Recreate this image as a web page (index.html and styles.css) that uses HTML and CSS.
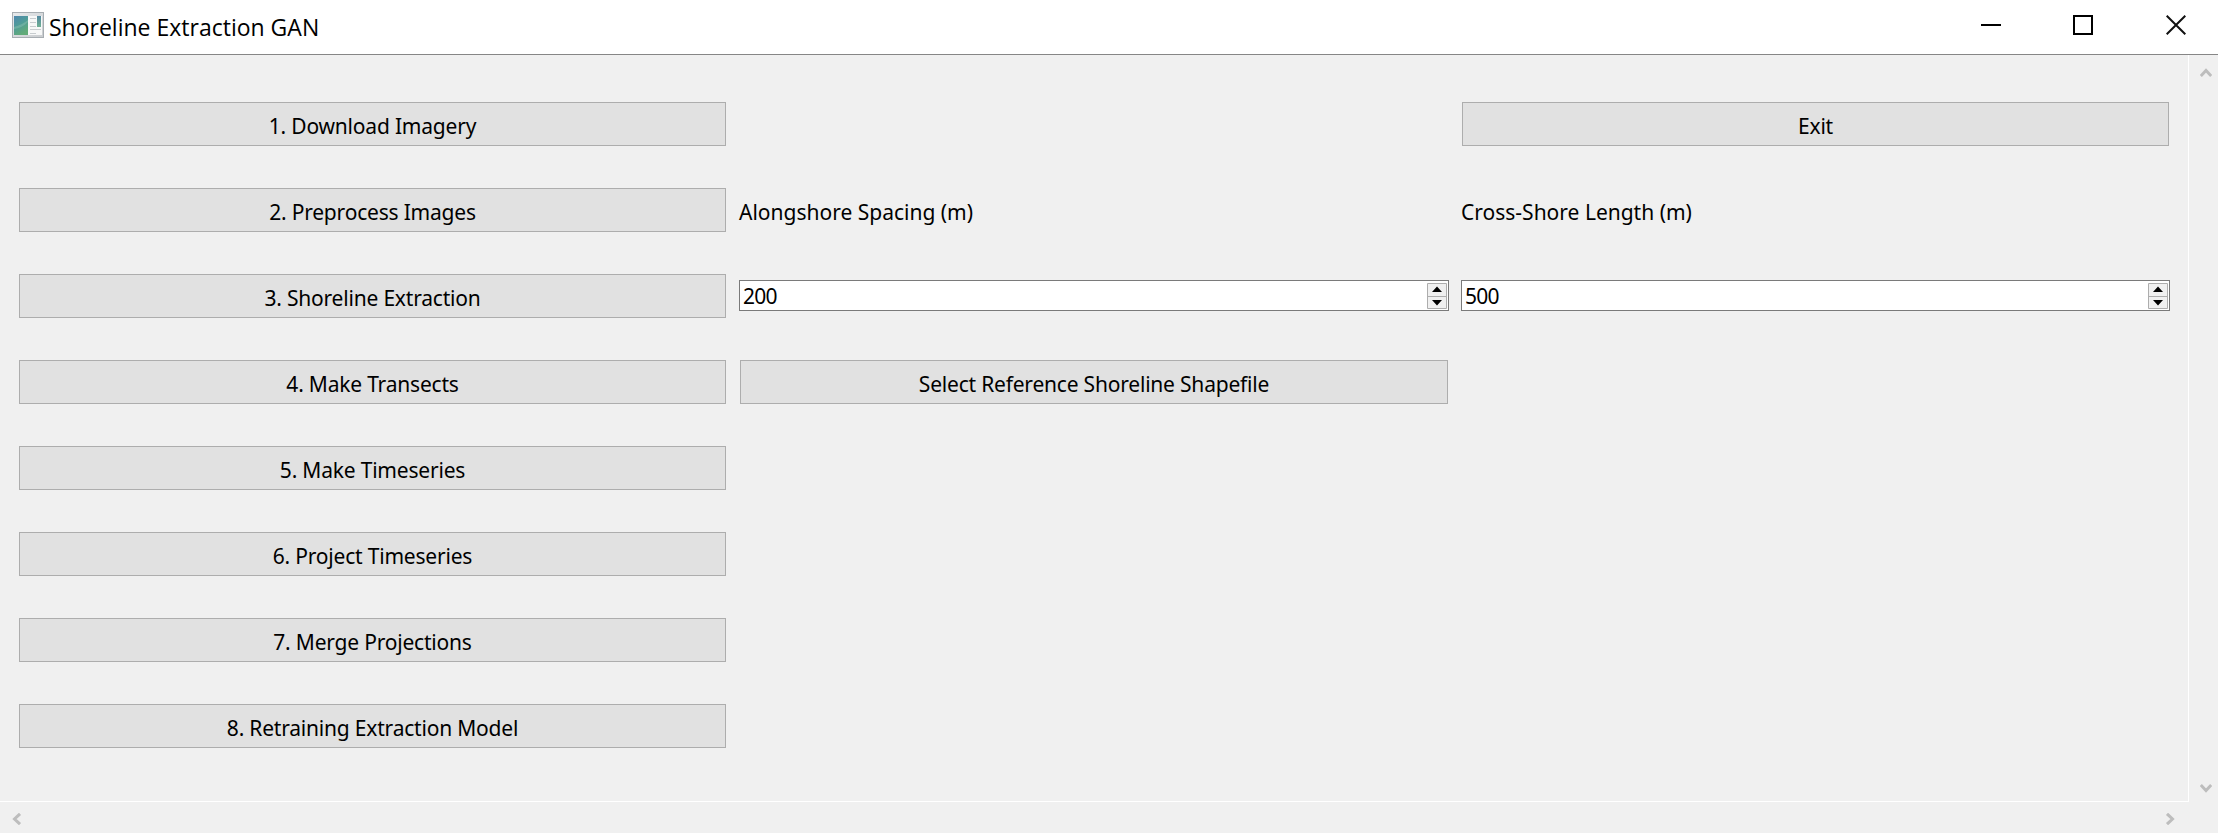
FILE: index.html
```html
<!DOCTYPE html>
<html lang="en">
<head>
<meta charset="utf-8">
<title>Shoreline Extraction GAN</title>
<link rel="stylesheet" href="styles.css">
</head>
<body>
<header class="titlebar">
  <svg class="app-icon" width="32" height="26" viewBox="0 0 32 26">
    <defs>
      <linearGradient id="pane" x1="0" y1="0" x2="0.5" y2="1"><stop offset="0" stop-color="#4e86ae"/><stop offset="0.5" stop-color="#4f9c98"/><stop offset="1" stop-color="#62ab78"/></linearGradient>
      <linearGradient id="side" x1="0" y1="0" x2="0" y2="1"><stop offset="0" stop-color="#5288a0"/><stop offset="1" stop-color="#70b094"/></linearGradient>
      <linearGradient id="frame" x1="0" y1="0" x2="1" y2="1"><stop offset="0" stop-color="#e6e9eb"/><stop offset="1" stop-color="#c9cccf"/></linearGradient>
    </defs>
    <rect x="0.5" y="0.5" width="31" height="25" fill="url(#frame)" stroke="#a7adb2"/>
    <rect x="2" y="4" width="28" height="19" fill="#f7f8f8"/>
    <rect x="2" y="4" width="14" height="19" fill="url(#pane)"/>
    <path d="M2 15Q10 13 16 8V10Q10 16 2 17Z" fill="#7fb9ac" opacity=".6"/>
    <path d="M18 6.500H24M18 10.500H24M18 14.500H24M18 17.500H29M18 21.500H24" stroke="#c7cccf"/>
    <rect x="25" y="4" width="4" height="11" fill="url(#side)"/>
  </svg>
  <h1 class="title"><span class="t-title">Shoreline Extraction GAN</span></h1>
  <div class="controls">
    <svg width="20" height="20" viewBox="0 0 20 20"><path d="M0 10H20" stroke="#000" stroke-width="2"/></svg>
    <svg width="20" height="20" viewBox="0 0 20 20"><path d="M1 1H19V19H1Z" fill="none" stroke="#000" stroke-width="2"/></svg>
    <svg width="20" height="20" viewBox="0 0 20 20"><path d="M.7.7L19.300 19.300M19.300.7L.7 19.300" stroke="#111" stroke-width="2"/></svg>
  </div>
</header>
<main class="scroll-area">
  <section class="content">
    <div class="col">
      <button class="btn">1. Download Imagery</button>
      <button class="btn">2. Preprocess Images</button>
      <button class="btn">3. Shoreline Extraction</button>
      <button class="btn">4. Make Transects</button>
      <button class="btn">5. Make Timeseries</button>
      <button class="btn">6. Project Timeseries</button>
      <button class="btn">7. Merge Projections</button>
      <button class="btn">8. Retraining Extraction Model</button>
    </div>
    <div class="col">
      <div class="cell"></div>
      <label class="cell label">Alongshore Spacing (m)</label>
      <div class="cell"><div class="spin"><span>200</span>
        <svg class="arrows" width="20" height="26" viewBox="0 0 20 26"><path d="M.5.5H19.500V25.500H.5ZM.5 13.500H19.500" fill="#f0f0f0" stroke="#adadad"/><path d="M5 9L10 3.500L15 9ZM5 17L10 22.500L15 17Z"/></svg></div></div>
      <button class="btn">Select Reference Shoreline Shapefile</button>
    </div>
    <div class="col">
      <button class="btn">Exit</button>
      <label class="cell label">Cross-Shore Length (m)</label>
      <div class="cell"><div class="spin"><span>500</span>
        <svg class="arrows" width="20" height="26" viewBox="0 0 20 26"><path d="M.5.5H19.500V25.500H.5ZM.5 13.500H19.500" fill="#f0f0f0" stroke="#adadad"/><path d="M5 9L10 3.500L15 9ZM5 17L10 22.500L15 17Z"/></svg></div></div>
    </div>
  </section>
  <div class="vbar">
    <svg width="12" height="10" viewBox="0 0 12 10"><path d="M.8 8L6 2.500L11.200 8" fill="none" stroke="#bdbdbd" stroke-width="3"/></svg>
    <svg width="12" height="10" viewBox="0 0 12 10"><path d="M.8 2L6 7.500L11.200 2" fill="none" stroke="#bdbdbd" stroke-width="3"/></svg>
  </div>
  <div class="hbar">
    <svg width="10" height="12" viewBox="0 0 10 12"><path d="M8 .8L2.500 6L8 11.200" fill="none" stroke="#bdbdbd" stroke-width="3"/></svg>
    <svg width="10" height="12" viewBox="0 0 10 12"><path d="M2 .8L7.500 6L2 11.200" fill="none" stroke="#bdbdbd" stroke-width="3"/></svg>
  </div>
</main>
</body>
</html>
```
FILE: styles.css
```css
* { box-sizing: border-box; }
body {
  margin: 0;
  height: 833px;
  overflow: hidden;
  display: flex;
  flex-direction: column;
  background: #f0f0f0;
  color: #000;
  font: 21px/30px "Noto Sans", "Open Sans", sans-serif;
}
svg { display: block; flex: none; }
.titlebar {
  height: 55px;
  flex: none;
  display: flex;
  align-items: flex-start;
  background: #fff;
  border-bottom: 1px solid #868686;
}
.app-icon { margin: 12px 0 0 12px; }
.title {
  margin: 11px 0 0 5px;
  font: 23px/32px "Open Sans", "Noto Sans", sans-serif;
}
.controls { margin: 15px 32px 0 auto; display: flex; gap: 72px; }
.controls svg:last-child { margin-left: 1px; }
.scroll-area {
  flex: 1;
  display: grid;
  grid-template-columns: 2189px 29px;
  grid-template-rows: 747px 31px;
}
.content {
  display: grid;
  grid-template-columns: 709px 710px 709px;
  gap: 12px;
  padding: 47px 0 0 18px;
  border-right: 1px solid #fff;
  border-bottom: 1px solid #fff;
}
.col { display: flex; flex-direction: column; gap: 42px; }
.btn {
  height: 44px;
  flex: none;
  margin: 0 1px;
  padding: 3px 0 0;
  border: 1px solid #adadad;
  background: #e1e1e1;
  color: #000;
  font: inherit;
  letter-spacing: -0.2px;
}
.cell { height: 44px; flex: none; display: flex; align-items: center; }
.label { padding-top: 3px; }
.spin {
  width: 100%;
  height: 31px;
  margin-top: -1px;
  display: flex;
  align-items: center;
  justify-content: space-between;
  padding: 0 1px 0 3px;
  border: 1px solid #7a7a7a;
  background: #fff;
  letter-spacing: -0.7px;
}
.vbar {
  display: flex;
  flex-direction: column;
  align-items: center;
  justify-content: space-between;
  padding: 13px 0 9px 4px;
}
.hbar {
  display: flex;
  justify-content: space-between;
  align-items: center;
  padding: 3px 14px 0 12px;
}
```
